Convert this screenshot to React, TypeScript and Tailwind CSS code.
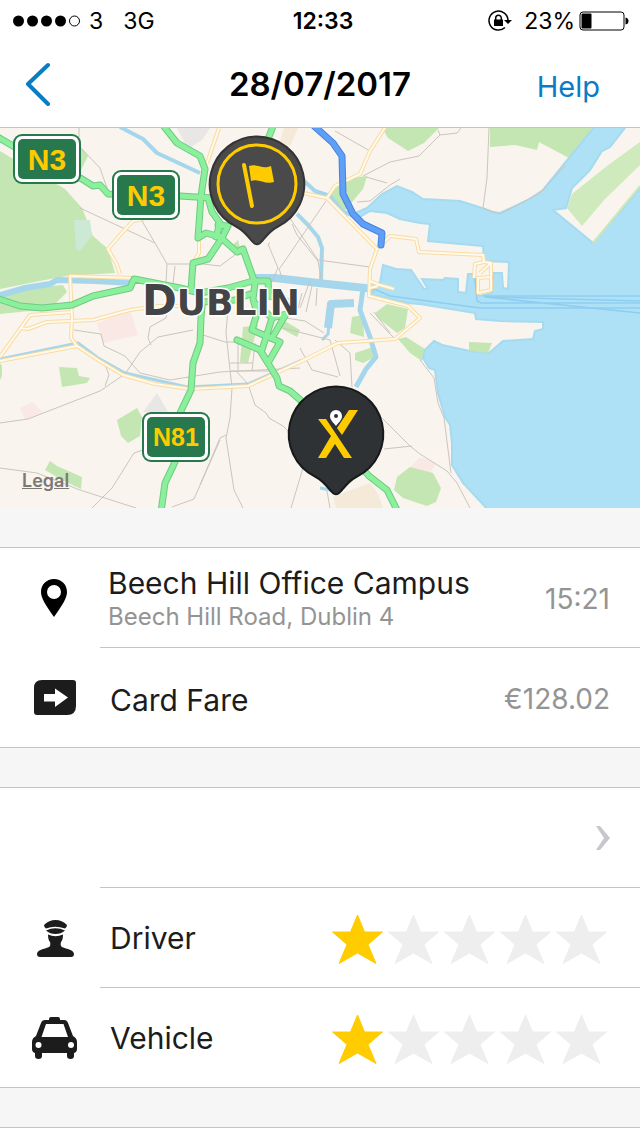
import { useState } from "react";

const greenRoads = [
    "M-4 8L13 18L82 51L93 58L100 57L108 66L180 68L212 70",
    "M162 -4L177 15L200 28L205 41L201 68L198 110L206 105L220 109",
    "M208 70L212 84L220 95L216 109M228 98L222 110M218 97L228 98",
    "M274 -4L266 16",
    "M218 107L237 124L243 121L255 155L253 171L257 185L252 202L280 214L268 235L260 222L237 212",
    "M222 110L208 131L193 135L191 162",
    "M-4 170L20 178L42 180L72 177L93 168L130 160L134 151L180 160L200 165L228 160L253 153L268 153L269 168L290 174",
    "M202 174L235 172L250 166",
    "M202 178L201 190L200 215L193 235L191 262L180 285L175 334L165 355L161 384",
    "M262 222L272 190L286 186L272 210",
    "M256 176L270 188",
    "M260 222L277 250L279 258L290 263L306 277",
    "M362 340L369 348L387 362L398 384",
];

const yellowRoads = [
    "M0 233L77 218L98 232L123 247L155 256L190 261L248 258L300 234L338 215L395 211L420 190L408 178L369 168L370 141L377 121L327 70L303 65",
    "M327 70L335 58L360 46L370 23L386 -2",
    "M77 218L71 210L72 190L70 148L133 150",
    "M120 146L117 137L108 121L120 107L133 93L144 91",
    "M0 229L30 187L72 184",
    "M20 200L28 201L47 194L93 192L130 182L158 178L180 178",
    "M219 0L207 35",
    "M199 111L199 125L193 135",
    "M382 116L390 108L416 111L419 124L483 127L484 134L475 136L474 150",
    "M484 134L491 135L491 149L478 150L478 165L491 162L491 149M480 145L491 135",
    "M370 153L380 157L394 161M370 160L378 158",
];

const lanes = [
    "M79 0L79 18L100 40L107 60M80 80L155 115L142 93M155 115L167 136L203 136L220 138L236 126",
    "M167 136L166 155M175 138L173 156M270 115L268 116L278 140L271 155M292 96L297 107L318 133L322 155",
    "M318 132L370 139M326 73L280 140M285 83L318 132M310 153L300 180M279 140L282 151",
    "M335 3L370 23M366 49L387 55M357 74L370 73L390 57L400 51M363 48L390 34L419 28L440 7L457 5L461 0M440 7L438 2",
    "M489 0L487 50L483 80L500 86L540 65L565 38",
    "M74 202L101 206L104 218L125 228L140 245L170 252L220 244L300 240",
    "M0 295L28 291L100 263L125 246L140 224L158 209L193 202",
    "M105 236L109 247L105 258M168 180L166 190L150 199L148 210L151 217",
    "M0 340L37 345L80 362L136 380M92 380L112 360L134 325L143 322M172 379L194 371L220 312M200 357L220 310L226 307",
    "M228 180L226 205L232 260L230 290L226 310L234 362L243 380",
    "M200 206L225 214L238 214M230 235L253 235M238 212L238 242M255 215L252 243M231 243L277 243",
    "M236 243L248 256L255 277L266 285L269 290L283 298L290 305M303 340L297 360L291 380",
    "M283 200L330 212L340 248M300 220L312 242L338 249M335 212L350 225L352 259",
    "M302 165L298 180M312 158L306 184M317 160L316 178M280 189L305 193L324 205M370 185L394 210M374 184L390 205",
    "M374 282L410 318L420 326L447 343L457 355L470 380M384 321L412 318",
    "M420 232L434 250L438 275L444 290L451 345M327 363L330 380",
];

const parks = [
    "M0 23L20 35L65 61L82 80L88 95L93 108L108 121L115 145L67 148L50 151L0 161Z",
    "M0 166L50 158L63 157L67 164L53 178L30 183L0 186Z",
    "M80 18L88 28L78 48L70 20Z",
    "M382 0L439 0L424 15L408 23L388 10Z",
    "M490 0L594 0L569 30L539 14L537 22L515 17L490 19Z",
    "M343 51L367 48L363 61L343 85L328 70Z",
    "M375 185L387 176L408 181L405 200L397 205L378 190Z",
    "M398 211L406 209L425 221L422 233L410 225Z",
    "M352 189L363 187L364 209L350 205Z",
    "M355 225L373 219L373 230L363 235L355 232Z",
    "M243 199L258 197L248 235L240 234Z",
    "M283 192L300 202L297 209L280 200Z",
    "M59 239L77 240L79 248L90 250L87 255L62 259Z",
    "M117 292L137 280L142 289L140 308L128 315L121 308Z",
    "M45 342L50 333L57 338L82 349L81 361L62 352Z",
    "M0 235L2 238L2 248L0 252Z",
    "M397 349L410 339L433 345L441 360L436 374L427 378L403 370L394 362Z",
    "M232 118L238 112L240 120L236 123Z",
];

const harbour =
    "M597 -4L569 30L543 62L528 72L500 85L492 84L482 80L460 73L423 71L412 64L397 58L382 66L367 80L353 86L358 90L370 83L387 85L400 91L420 95L430 96L428 113L483 118L484 133L509 134L508 161L503 160L502 145L493 145L492 165L480 168L477 165L473 146L468 146L466 165L458 164L458 151L445 150L443 152L422 151L428 161L424 161L411 142L396 141L383 137L380 155L372 158L370 166L387 170L407 175L420 176L475 185L476 191L501 193L543 194L543 201L535 203L533 211L503 213L489 225L470 223L442 217L434 213L425 222L423 230L429 240L435 242L438 265L445 289L450 297L452 315L452 337L463 355L490 384L644 384L644 56L593 115L553 82L566 80L572 60L590 42L602 23L610 19L628 -4Z";

const pinShape =
    "M0 -47.5A47.5 47.5 0 0 1 21 42.5C14 46 10 51 6 56L2.5 59.5Q0 61 -2.5 59.5L-6 56C-10 51 -14 46 -21 42.5A47.5 47.5 0 0 1 0 -47.5Z";

function RoadSign({ x, y, label, small }: { x: number; y: number; label: string; small?: boolean }) {
    return (
        <g>
            <rect x={x} y={y} width="68" height="50" rx="9" fill="#27794d" />
            <rect x={x + 2} y={y + 2} width="64" height="46" rx="7" fill="#fff" />
            <rect x={x + 5} y={y + 5} width="58" height="40" rx="5" fill="#27794d" />
            <text
                x={x + 34}
                y={small ? y + 34 : y + 36}
                textAnchor="middle"
                fill="#fecb00"
                className={
                    small ? "font-['Liberation_Sans',sans-serif] text-[25px] font-bold" : "font-['Liberation_Sans',sans-serif] text-[30px] font-bold"
                }
            >
                {label}
            </text>
        </g>
    );
}

function TripMap() {
    return (
        <div className="relative h-[380px] overflow-hidden bg-[#f9f4ed]">
            <svg viewBox="0 0 640 380" preserveAspectRatio="xMidYMid slice" className="block h-full w-full" role="img" aria-label="Map of Dublin">
                <rect width="640" height="380" fill="#f9f4ed" />
                <g fill="#e9e7e5">
                    <path d="M177 0L210 0L202 12L188 21Z" />
                    <path d="M157 265L168 284L143 284Z" />
                </g>
                <g fill="#fae8e4">
                    <path d="M97 195L130 182L138 207L103 215Z" />
                    <path d="M20 280L32 274L43 284L25 292Z" />
                    <path d="M420 329L436 335L427 350L408 341Z" />
                </g>
                <path d="M333 369L370 355L378 366L383 380L336 380Z" fill="#f5e9d8" />
                <path d="M284 0L298 0L290 18L280 14Z" fill="#f5e9d8" />
                <g fill="#c4e6b2">
                    {parks.map((d) => (
                        <path key={d} d={d} />
                    ))}
                </g>
                <path d="M74 92L90 92L92 108L80 123L76 121Z" fill="#cbe9d5" />
                <path d={harbour} fill="#aee1f5" stroke="#a5daf0" strokeWidth="2" />
                <path d="M640 14L607 38L572 66L567 80L582 98L605 71L640 37Z" fill="#cfeabc" />
                <path d="M469 214L492 215L488 225L469 223Z" fill="#c4e6b2" />
                <path d="M640 58L593 115" stroke="#cfe8b8" strokeWidth="2" fill="none" />
                <g fill="none" stroke="#a5d6ec" strokeLinejoin="round">
                    <path d="M0 167L25 160L50 156L57 152L95 153L133 155" strokeWidth="6" />
                    <path d="M120 -1L143 11L157 25L200 45" strokeWidth="4" />
                    <path d="M255 150L275 150L327 156L375 161" strokeWidth="8" />
                    <path d="M303 52L315 63L330 68L343 84L356 88" strokeWidth="4" />
                    <path d="M297 86L308 97L318 109L322 120L321 152" strokeWidth="4" />
                    <path d="M363 161L360 182L370 209L376 229L366 241L356 259" strokeWidth="5" />
                    <path d="M354 175L331 176L328 200" strokeWidth="8" />
                    <path d="M329 196L328 206L322 212" strokeWidth="3" />
                    <path d="M0 231L78 215L98 230L125 245L187 259L248 256L302 232" strokeWidth="3" />
                    <path d="M320 360L330 362" strokeWidth="3" />
                </g>
                <g fill="none" stroke="#8fcdf0" strokeWidth="1.5">
                    <path d="M372 160L390 168L420 172L480 180L640 180" />
                    <path d="M483 168L640 168M475 150L477 173L481 175L640 175M485 169L640 185" />
                    <path d="M488 169L640 173" />
                </g>
                <g fill="none" stroke="#cac5be" strokeWidth="1">
                    {lanes.map((d) => (
                        <path key={d} d={d} />
                    ))}
                </g>
                <g fill="none" stroke="#fadba3" strokeWidth="4" strokeLinejoin="round">
                    {yellowRoads.map((d) => (
                        <path key={d} d={d} />
                    ))}
                </g>
                <g fill="none" stroke="#fffaea" strokeWidth="2" strokeLinejoin="round">
                    {yellowRoads.map((d) => (
                        <path key={d} d={d} />
                    ))}
                </g>
                <g fill="none" stroke="#6fca85" strokeWidth="7" strokeLinejoin="round" strokeLinecap="round">
                    {greenRoads.map((d) => (
                        <path key={d} d={d} />
                    ))}
                </g>
                <g fill="none" stroke="#8bf09b" strokeWidth="5" strokeLinejoin="round" strokeLinecap="round">
                    {greenRoads.map((d) => (
                        <path key={d} d={d} />
                    ))}
                </g>
                <g fill="none" strokeLinejoin="round" strokeLinecap="round">
                    <path d="M313 -3L333 15L342 28L343 66L353 86L363 96L382 105L381 117" stroke="#4583e4" strokeWidth="7" />
                    <path d="M313 -3L333 15L342 28L343 66L353 86L363 96L382 105L381 117" stroke="#5f9ff6" strokeWidth="5" />
                </g>
                <RoadSign x={13} y={6} label="N3" />
                <RoadSign x={112} y={42} label="N3" />
                <RoadSign x={142} y={284} label="N81" small />
                <text
                    x="221"
                    y="187"
                    textAnchor="middle"
                    fill="#444446"
                    stroke="#fff"
                    strokeWidth="3"
                    strokeLinejoin="round"
                    paintOrder="stroke"
                    className="font-['DejaVu_Sans',sans-serif] text-[42px] font-bold"
                >
                    D<tspan className="text-[36px]">UBLIN</tspan>
                </text>
                <g transform="translate(257 56)">
                    <path d={pinShape} fill="#4a4a4b" stroke="#343435" strokeWidth="2" />
                    <circle r="39" fill="none" stroke="#fecb00" strokeWidth="3" />
                    <path d="M-13 -19L-5 22" stroke="#fecb00" strokeWidth="4" strokeLinecap="round" />
                    <path d="M-8 -18C0 -21 5 -14 14 -18L17 -2C8 1 2 -6 -6 -3Z" fill="#fecb00" />
                </g>
                <g transform="translate(336 306)">
                    <path d={pinShape} fill="#2e3235" stroke="#17191a" strokeWidth="2" />
                    <path d="M-18 -15H-10L16 24H8L-1 10L-10 24H-18L-5 2Z" fill="#fecb00" />
                    <path d="M13 -24H22L6 1L1 -6Z" fill="#fecb00" />
                    <path d="M0 -24A6 6 0 0 1 6 -18C6 -14 3 -12 0 -8C-3 -12 -6 -14 -6 -18A6 6 0 0 1 0 -24Z" fill="#fff" />
                    <circle cy="-18" r="2" fill="#2e3235" />
                </g>
            </svg>
            <a href="#legal" className="absolute bottom-[15px] left-[22px] text-[18px] leading-6 font-semibold text-[#7c7975] underline">
                Legal
            </a>
        </div>
    );
}

function StatusBar() {
    return (
        <div className="grid h-10 grid-cols-3 items-center pt-px pr-[11px] pl-[13px] text-[23px] leading-7 text-black">
            <div className="flex items-center">
                <svg width="68" height="12" viewBox="0 0 68 12" aria-hidden="true">
                    {[5.5, 19.5, 33.5, 47.5].map((cx) => (
                        <circle key={cx} cx={cx} cy="6" r="5.5" />
                    ))}
                    <circle cx="61.5" cy="6" r="5" fill="none" stroke="#000" />
                </svg>
                <span className="ml-2">3</span>
                <span className="ml-5">3G</span>
            </div>
            <div className="pl-1 text-center font-semibold">12:33</div>
            <div className="flex items-center justify-end">
                <svg width="24" height="22" viewBox="0 0 24 22" fill="none" stroke="#000" strokeWidth="1.5" aria-hidden="true">
                    <path d="M17 17.5A9.5 9.5 0 1 1 20 10" />
                    <path d="M16 10H24L20 14Z" fill="#000" stroke="none" />
                    <rect x="6" y="9.5" width="9" height="6.5" fill="#000" stroke="none" />
                    <path d="M7.7 10V8A2.8 2.8 0 0 1 13.3 8V10" />
                </svg>
                <span className="ml-3">23%</span>
                <svg width="50" height="20" viewBox="0 0 50 20" className="ml-1" aria-hidden="true">
                    <rect x="1" y="1" width="44" height="18" rx="3" fill="none" stroke="#000" />
                    <rect x="2.5" y="2.5" width="10" height="15" rx="1" />
                    <path d="M46.5 6.5Q49.5 7 49.5 10T46.5 13.5Z" />
                </svg>
            </div>
        </div>
    );
}

function Stars({ label, value, onChange }: { label: string; value: number; onChange: (n: number) => void }) {
    return (
        <div className="flex pt-1" role="group" aria-label={label}>
            {[1, 2, 3, 4, 5].map((n) => (
                <button key={n} type="button" aria-label={`${label} ${n}/5`} aria-pressed={n <= value} onClick={() => onChange(n)} className="w-14">
                    <svg
                        viewBox="0 0 56 52"
                        strokeWidth="1"
                        strokeLinejoin="round"
                        className={n <= value ? "block w-14 fill-[#ffcc00] stroke-[#ffcc00]" : "block w-14 fill-[#eeeeee] stroke-[#eeeeee]"}
                    >
                        <path d="M27.5 1L34.5 18H52.5L38 30.5L46 49.5L27.5 39L9 49.5L17 30.5L2.5 18H20.5Z" />
                    </svg>
                </button>
            ))}
        </div>
    );
}

export default function App() {
    const [driver, setDriver] = useState(1);
    const [vehicle, setVehicle] = useState(1);

    return (
        <div className="min-h-screen bg-white font-['Inter',sans-serif] text-[#1c1c1c]">
            <StatusBar />
            <header className="grid h-22 grid-cols-3 items-center border-b border-[#c4c4c4] px-6">
                <button type="button" aria-label="Back" className="w-8">
                    <svg width="28" height="44" viewBox="0 0 28 44" fill="none" stroke="#0a7cc4" strokeWidth="4" strokeLinecap="round" strokeLinejoin="round">
                        <path d="M24 3L4 22L24 42" />
                    </svg>
                </button>
                <h1 className="pt-px text-center text-[33px] leading-10 font-semibold whitespace-nowrap text-black">28/07/2017</h1>
                <a href="#help" className="justify-self-end pt-1.5 pr-4 text-[29px] leading-9 text-[#0a7cc4]">
                    Help
                </a>
            </header>

            <TripMap />

            <div className="h-[39px] bg-[#f6f6f6]" />

            <section className="border-y border-[#c4c4c4]">
                <div className="flex">
                    <div className="flex w-25 items-center pl-10">
                        <svg width="28" height="40" viewBox="0 0 28 40" aria-hidden="true">
                            <path
                                fillRule="evenodd"
                                d="M14 1C21.5 1 27 6.5 27 14C27 20 23 26 14 39C5 26 1 20 1 14C1 6.5 6.5 1 14 1ZM14 7A7 7 0 1 0 14 21A7 7 0 1 0 14 7Z"
                            />
                        </svg>
                    </div>
                    <div className="flex h-25 flex-1 items-center justify-between border-b border-[#c4c4c4] pt-0.5 pr-[30px] pl-2">
                        <div>
                            <div className="text-[30px] leading-9">Beech Hill Office Campus</div>
                            <div className="text-[24px] leading-8 text-[#949494]">Beech Hill Road, Dublin 4</div>
                        </div>
                        <div className="text-[28px] leading-8 text-[#949494]">15:21</div>
                    </div>
                </div>
                <div className="flex h-[99px] items-center justify-between pr-[30px]">
                    <div className="flex items-center">
                        <div className="w-[110px] pl-[34px]">
                            <svg width="42" height="35" viewBox="0 0 42 35" aria-hidden="true">
                                <path d="M8 0H39Q42 0 42 3V26Q42 35 33 35H3Q0 35 0 32V8Q0 0 8 0Z" fill="#1c1c1c" />
                                <path d="M10 14H21V8.5L34 17.5L21 27V21.5H10Z" fill="#fff" />
                            </svg>
                        </div>
                        <div className="pt-1 text-[30px] leading-9">Card Fare</div>
                    </div>
                    <div className="pt-0.5 text-[28px] leading-8 text-[#949494]">€128.02</div>
                </div>
            </section>

            <div className="h-[39px] bg-[#f6f6f6]" />

            <section className="border-y border-[#c4c4c4]">
                <button type="button" aria-label="Details" className="flex w-full pl-25">
                    <span className="flex h-25 flex-1 items-center justify-end border-b border-[#c4c4c4] pr-[30px]">
                        <svg width="14" height="24" viewBox="0 0 14 24" aria-hidden="true">
                            <path d="M0 0H4L14 12L4 24H0L8 12Z" fill="#c7c7cc" />
                        </svg>
                    </span>
                </button>
                <div className="flex">
                    <div className="flex w-25 items-center pl-[37px]">
                        <svg width="37" height="37" viewBox="0 0 37 37" fill="#1c1c1c" aria-hidden="true">
                            <path d="M7 5Q12 0 18.5 0T30 5Q30 7 28 8.5Q18 5 9 8.5Q7 7 7 5Z" />
                            <path d="M9 10.5Q18.5 6 28 10.5Q24 14 18.5 14T9 10.5Z" />
                            <path d="M11 14.5Q18.5 18 26 14.5Q26 20 24 22Q23 26 25 27C30 29 37 30 37 34Q37 37 34 37H3Q0 37 0 34C0 30 7 29 12 27Q14 26 13 22Q11 20 11 14.5Z" />
                        </svg>
                    </div>
                    <div className="flex h-25 flex-1 items-center justify-between border-b border-[#c4c4c4] pr-[30px] pl-2.5">
                        <div className="text-[30px] leading-9">Driver</div>
                        <Stars label="Driver" value={driver} onChange={setDriver} />
                    </div>
                </div>
                <div className="flex h-[99px] items-center justify-between pr-[30px]">
                    <div className="flex items-center">
                        <div className="w-[110px] pl-8">
                            <svg width="45" height="42" viewBox="0 0 45 42" aria-hidden="true">
                                <path
                                    fill="#1c1c1c"
                                    fillRule="evenodd"
                                    d="M17 3V2Q17 0 19 0H26Q28 0 28 2V3H32Q35 3 36 6L41 19Q45 21 45 25V32Q45 35 42 36V39Q42 42 38.5 42T35 39V36H10V39Q10 42 6.5 42T3 39V36Q0 35 0 32V25Q0 21 4 19L9 6Q10 3 13 3ZM14 7L9.5 20H36L31.5 7Z"
                                />
                                <circle cx="6.5" cy="28" r="3" fill="#fff" />
                                <circle cx="39" cy="28" r="3" fill="#fff" />
                            </svg>
                        </div>
                        <div className="text-[30px] leading-9">Vehicle</div>
                    </div>
                    <Stars label="Vehicle" value={vehicle} onChange={setVehicle} />
                </div>
            </section>

            <div className="h-10 border-b border-[#c4c4c4] bg-[#f6f6f6]" />
        </div>
    );
}
